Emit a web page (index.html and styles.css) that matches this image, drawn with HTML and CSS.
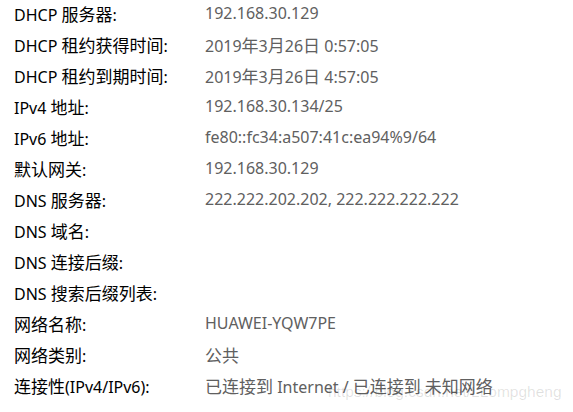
FILE: index.html
```html
<!DOCTYPE html>
<html>
<head>
    <title>网络属性</title>
    <link rel="stylesheet" href="styles.css">
</head>
<body>
    <div class="props">
        <div class="label">DHCP <span class="zh">服务器</span>:</div><div class="value">192.168.30.129</div>
        <div class="label">DHCP <span class="zh">租约获得时间</span>:</div><div class="value">2019<span class="zh">年</span>3<span class="zh">月</span>26<span class="zh">日</span> 0:57:05</div>
        <div class="label">DHCP <span class="zh">租约到期时间</span>:</div><div class="value">2019<span class="zh">年</span>3<span class="zh">月</span>26<span class="zh">日</span> 4:57:05</div>
        <div class="label">IPv4 <span class="zh">地址</span>:</div><div class="value">192.168.30.134/25</div>
        <div class="label">IPv6 <span class="zh">地址</span>:</div><div class="value">fe80::fc34:a507:41c:ea94%9/64</div>
        <div class="label"><span class="zh">默认网关</span>:</div><div class="value">192.168.30.129</div>
        <div class="label">DNS <span class="zh">服务器</span>:</div><div class="value">222.222.202.202, 222.222.222.222</div>
        <div class="label">DNS <span class="zh">域名</span>:</div><div class="value"></div>
        <div class="label">DNS <span class="zh">连接后缀</span>:</div><div class="value"></div>
        <div class="label">DNS <span class="zh">搜索后缀列表</span>:</div><div class="value"></div>
        <div class="label"><span class="zh">网络名称</span>:</div><div class="value">HUAWEI-YQW7PE</div>
        <div class="label"><span class="zh">网络类别</span>:</div><div class="value"><span class="zh">公共</span></div>
        <div class="label"><span class="zh">连接性</span>(IPv4/IPv6):</div><div class="value"><span class="zh">已连接到</span> Internet / <span class="zh">已连接到 未知网络</span></div>
    </div>
    <div class="watermark">https://blog.csdn.net/LLompgheng</div>
</body>
</html>
```

FILE: styles.css
```css
body {
    margin: 0;
    background-color: #fff;
    font-family: "Noto Sans", "Noto Sans CJK SC", sans-serif;
    font-size: 16px;
    position: relative;
    width: 573px;
    height: 412px;
    overflow: hidden;
}

.props {
    display: grid;
    grid-template-columns: 191px 1fr;
    grid-auto-rows: 31px;
    padding: 0 0 0 14px;
    margin-top: -2px;
}

.label,
.value {
    line-height: 31px;
    white-space: nowrap;
}

.zh {
    font-family: "Noto Sans CJK SC", sans-serif;
    font-size: 17px;
}

.label {
    color: #000;
}

.value {
    color: #606060;
}

.watermark {
    position: absolute;
    left: 328px;
    top: 383px;
    font-family: "Liberation Sans", Arial, sans-serif;
    font-size: 15.5px;
    color: rgba(0, 0, 0, 0.12);
}
```
